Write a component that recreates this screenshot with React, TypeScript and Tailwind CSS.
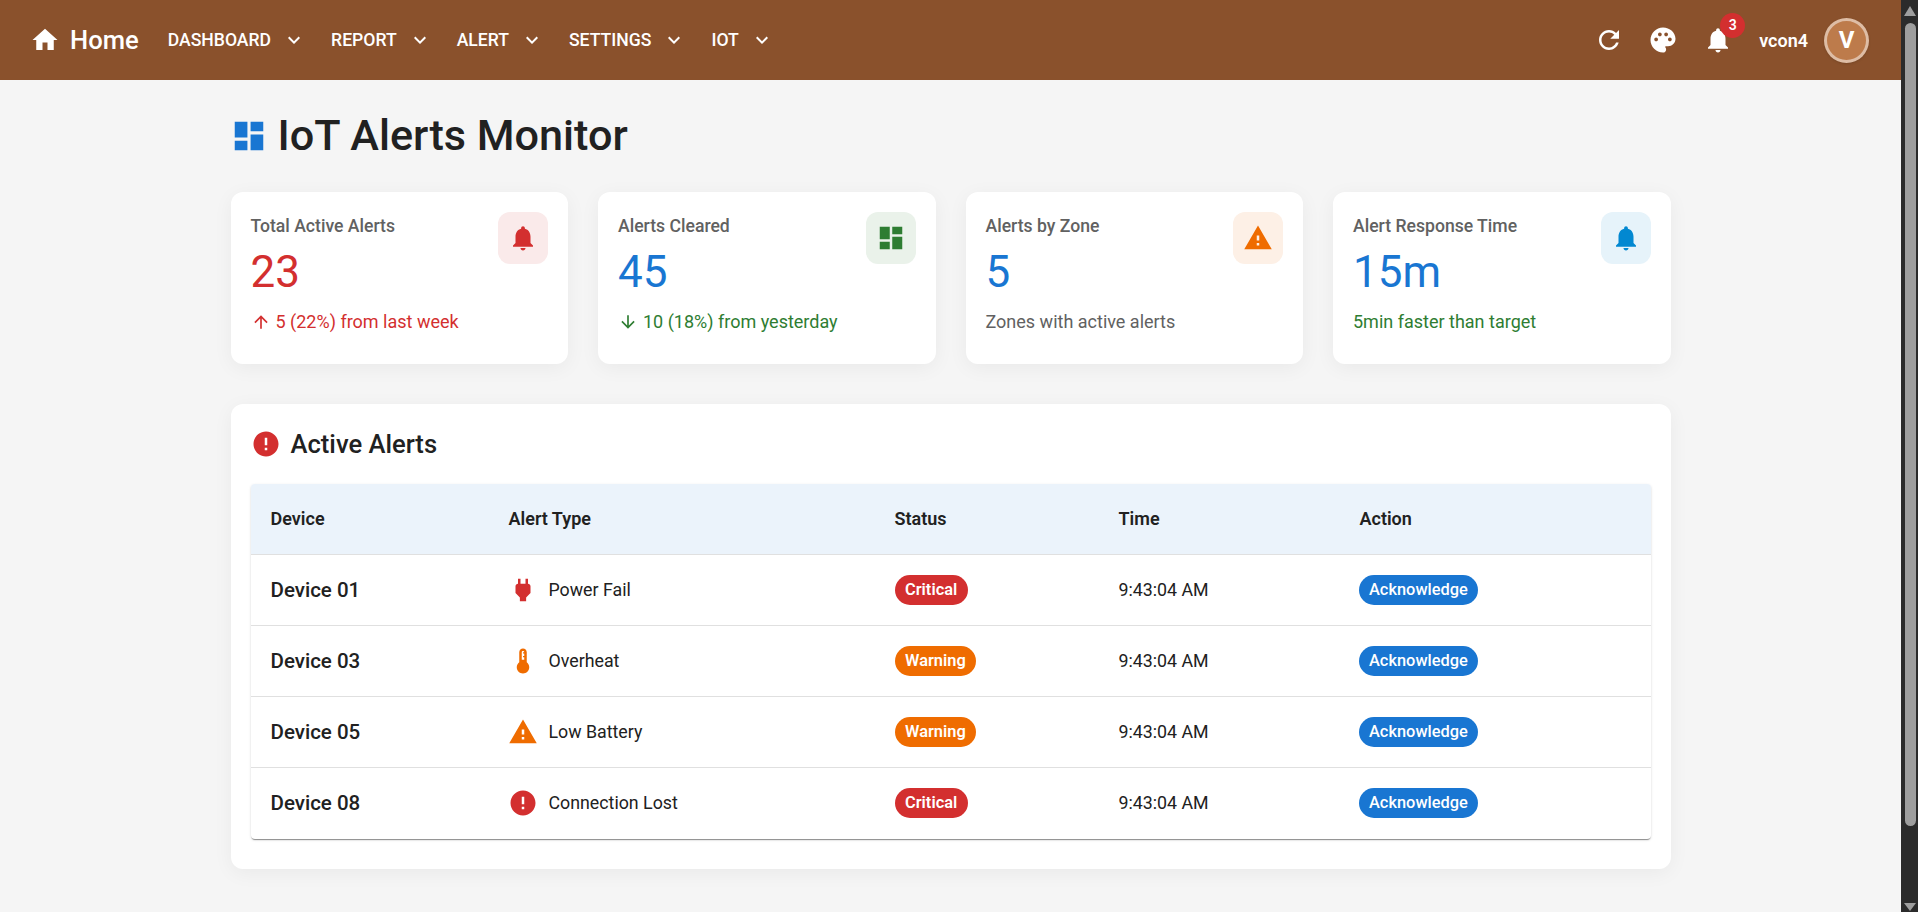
import type { ReactNode } from 'react';

const P = {
  home: 'M10 20v-6h4v6h5v-8h3L12 3 2 12h3v8z',
  chevron: 'M7.41 8.59 12 13.17l4.59-4.58L18 10l-6 6-6-6z',
  refresh: 'M17.65 6.35C16.2 4.9 14.21 4 12 4c-4.42 0-7.99 3.58-7.99 8s3.57 8 7.99 8c3.73 0 6.84-2.55 7.73-6h-2.08c-.82 2.33-3.04 4-5.65 4-3.31 0-6-2.69-6-6s2.69-6 6-6c1.66 0 3.14.69 4.22 1.78L13 11h7V4l-2.35 2.35z',
  palette: 'M12 2C6.49 2 2 6.49 2 12s4.49 10 10 10c1.38 0 2.5-1.12 2.5-2.5 0-.61-.23-1.2-.64-1.67-.08-.1-.13-.21-.13-.33 0-.28.22-.5.5-.5H16c3.31 0 6-2.69 6-6 0-4.96-4.49-9-10-9zm5.5 11c-.83 0-1.5-.67-1.5-1.5s.67-1.5 1.5-1.5 1.5.67 1.5 1.5-.67 1.5-1.5 1.5zm-3-4c-.83 0-1.5-.67-1.5-1.5S13.67 6 14.5 6s1.5.67 1.5 1.5S15.33 9 14.5 9zM5 11.5c0-.83.67-1.5 1.5-1.5s1.5.67 1.5 1.5S7.33 13 6.5 13 5 12.33 5 11.5zm6-4c0 .83-.67 1.5-1.5 1.5S8 8.33 8 7.5 8.67 6 9.5 6s1.5.67 1.5 1.5z',
  bell: 'M12 22c1.1 0 2-.9 2-2h-4c0 1.1.89 2 2 2zm6-6v-5c0-3.07-1.64-5.64-4.5-6.32V4c0-.83-.67-1.5-1.5-1.5s-1.5.67-1.5 1.5v.68C7.63 5.36 6 7.92 6 11v5l-2 2v1h16v-1l-2-2z',
  dashboard: 'M3 13h8V3H3v10zm0 8h8v-6H3v6zm10 0h8V11h-8v10zm0-18v6h8V3h-8z',
  warning: 'M1 21h22L12 2 1 21zm12-3h-2v-2h2v2zm0-4h-2v-4h2v4z',
  error: 'M12 2C6.48 2 2 6.48 2 12s4.48 10 10 10 10-4.48 10-10S17.52 2 12 2zm1 15h-2v-2h2v2zm0-4h-2V7h2v6z',
  up: 'M4 12l1.41 1.41L11 7.83V20h2V7.83l5.58 5.59L20 12l-8-8-8 8z',
  down: 'M20 12l-1.41-1.41L13 16.17V4h-2v12.17l-5.58-5.59L4 12l8 8 8-8z',
  power: 'M16.01 7 16 3h-2v4h-4V3H8v4h-.01C7 6.99 6 7.99 6 8.99v5.49L9.5 18v3h5v-3l3.5-3.51v-5.5c0-1-1-2-1.99-1.99z',
  thermostat: 'M15 13V5c0-1.66-1.34-3-3-3S9 3.34 9 5v8c-1.21.91-2 2.37-2 4 0 2.76 2.24 5 5 5s5-2.24 5-5c0-1.63-.79-3.09-2-4zm-4-8c0-.55.45-1 1-1s1 .45 1 1h-1v1h1v2h-1v1h1v2h-2V5z',
};

function Icon({ d, className }: { d: string; className: string }) {
  return (
    <svg viewBox="0 0 24 24" fill="currentColor" className={`shrink-0 ${className}`}>
      <path d={d} />
    </svg>
  );
}

const navItems = ['DASHBOARD', 'REPORT', 'ALERT', 'SETTINGS', 'IOT'];

function Header() {
  return (
    <header className="h-20 shrink-0 bg-[#8a512c] text-white flex items-center pl-[30px] pr-[32px]">
      <div className="flex items-center gap-[10px] mr-[29px]">
        <Icon d={P.home} className="w-[30px] h-[30px]" />
        <span className="text-[25.6px] font-medium leading-none pt-[1px]">Home</span>
      </div>
      <nav className="flex items-center gap-[25px]">
        {navItems.map((n) => (
          <div key={n} className="flex items-center gap-[11px]">
            <span className="text-[17.6px] font-medium">{n}</span>
            <Icon d={P.chevron} className="w-6 h-6" />
          </div>
        ))}
      </nav>
      <div className="ml-auto flex items-center">
        <Icon d={P.refresh} className="w-[30px] h-[30px] mr-[24px]" />
        <Icon d={P.palette} className="w-[30px] h-[30px] mr-[25px]" />
        <div className="relative mr-[26px]">
          <Icon d={P.bell} className="w-[30px] h-[30px]" />
          <span className="absolute -top-[12px] left-[17px] w-[25px] h-[25px] rounded-full bg-[#d32f2f] flex items-center justify-center text-[14px] font-semibold">3</span>
        </div>
        <span className="text-[18px] font-semibold mr-[16px]">vcon4</span>
        <div className="w-[45px] h-[45px] rounded-full bg-[#bd7b4b] border-[3px] border-white/50 shadow flex items-center justify-center text-[24px] font-bold">V</div>
      </div>
    </header>
  );
}

function StatCard(props: {
  label: string; value: string; valueColor: string; iconBox: string; icon: ReactNode; sub: ReactNode;
}) {
  return (
    <div className="bg-white rounded-xl p-5 h-[172px] shadow-[0_4px_20px_rgba(0,0,0,0.05)] flex justify-between items-start">
      <div>
        <div className="text-[17.6px] font-medium text-[#616161] leading-[28px]">{props.label}</div>
        <div className={`mt-[6px] text-[44px] leading-[52px] ${props.valueColor}`}>{props.value}</div>
        <div className="mt-[12px] text-[18px] leading-[24px] flex items-center gap-[5px]">{props.sub}</div>
      </div>
      <div className={`w-[50px] h-[52px] rounded-xl flex items-center justify-center ${props.iconBox}`}>{props.icon}</div>
    </div>
  );
}

const rows = [
  { device: 'Device 01', icon: P.power, color: 'text-[#d32f2f]', type: 'Power Fail', status: 'Critical', badge: 'bg-[#d32f2f]' },
  { device: 'Device 03', icon: P.thermostat, color: 'text-[#ef6c00]', type: 'Overheat', status: 'Warning', badge: 'bg-[#ef6c00]' },
  { device: 'Device 05', icon: P.warning, color: 'text-[#ef6c00]', type: 'Low Battery', status: 'Warning', badge: 'bg-[#ef6c00]' },
  { device: 'Device 08', icon: P.error, color: 'text-[#d32f2f]', type: 'Connection Lost', status: 'Critical', badge: 'bg-[#d32f2f]' },
];

function AlertsTable() {
  return (
    <div className="rounded shadow-[0_2px_1px_-1px_rgba(0,0,0,0.3),0_1px_1px_0_rgba(0,0,0,0.14),0_1px_3px_0_rgba(0,0,0,0.12)] overflow-hidden">
      <table className="w-full table-fixed border-collapse text-left text-[#212121]">
        <thead>
          <tr className="h-[70px] bg-[#ebf3fb] border-b border-[#e0e0e0] text-[18px]">
            <th className="w-[238px] pl-5 font-semibold">Device</th>
            <th className="w-[386px] pl-5 font-semibold">Alert Type</th>
            <th className="w-[224px] pl-5 font-semibold">Status</th>
            <th className="w-[241px] pl-5 font-semibold">Time</th>
            <th className="pl-5 font-semibold">Action</th>
          </tr>
        </thead>
        <tbody>
          {rows.map((r, i) => (
            <tr key={r.device} className={i < rows.length - 1 ? 'h-[71px] border-b border-[#e0e0e0]' : 'h-[72px]'}>
              <td className="pl-5 pt-[1px] text-[20.5px] font-medium">{r.device}</td>
              <td className="pl-5">
                <div className="flex items-center gap-[11px] -ml-[1px] text-[17.8px]">
                  <Icon d={r.icon} className={`w-[30px] h-[30px] ${r.color}`} />
                  <span className="pt-[1px]">{r.type}</span>
                </div>
              </td>
              <td className="pl-5">
                <span className={`inline-flex items-center h-[30px] pt-[1px] px-[10.5px] rounded-full text-white text-[16.4px] font-semibold ${r.badge}`}>{r.status}</span>
              </td>
              <td className="pl-5 pt-[1px] text-[17.8px]">9:43:04 AM</td>
              <td className="pl-5">
                <span className="inline-flex items-center h-[30px] pt-[1px] px-[10.5px] -ml-[1px] rounded-full bg-[#1976d2] text-white text-[16.4px] font-medium">Acknowledge</span>
              </td>
            </tr>
          ))}
        </tbody>
      </table>
    </div>
  );
}

function Scrollbar() {
  return (
    <aside className="w-[17px] shrink-0 bg-[#2b2b2b] flex flex-col items-center">
      <div className="h-[23px] w-full flex justify-center pt-[6px]">
        <div className="w-0 h-0 border-x-[6px] border-x-transparent border-b-[10px] border-b-[#9e9e9e]" />
      </div>
      <div className="w-[11px] h-[803px] ml-[1px] rounded-full bg-[#9e9e9e]" />
      <div className="mt-auto pb-[1px]">
        <div className="w-0 h-0 border-x-[6px] border-x-transparent border-t-[8px] border-t-[#9e9e9e]" />
      </div>
    </aside>
  );
}

export default function App() {
  return (
    <div className="h-screen flex overflow-hidden bg-[#f5f5f5] font-['Roboto',sans-serif] text-[#212121]">
      <div className="flex-1 min-w-0 flex flex-col">
        <Header />
        <main className="w-[1440px] mx-auto">
          <h1 className="flex items-center gap-[10px] h-[112px] text-[43.2px] font-medium">
            <Icon d={P.dashboard} className="w-[38px] h-[38px] -ml-[1px] text-[#1976d2]" />
            IoT Alerts Monitor
          </h1>
          <div className="grid grid-cols-4 gap-[30px]">
            <StatCard
              label="Total Active Alerts" value="23" valueColor="text-[#d32f2f]" iconBox="bg-[#faeaea]"
              icon={<Icon d={P.bell} className="w-[30px] h-[30px] text-[#d32f2f]" />}
              sub={<><Icon d={P.up} className="w-5 h-5 text-[#d32f2f]" /><span className="text-[#d32f2f]">5 (22%) from last week</span></>}
            />
            <StatCard
              label="Alerts Cleared" value="45" valueColor="text-[#1976d2]" iconBox="bg-[#eaf2ea]"
              icon={<Icon d={P.dashboard} className="w-[30px] h-[30px] text-[#2e7d32]" />}
              sub={<><Icon d={P.down} className="w-5 h-5 text-[#2e7d32]" /><span className="text-[#2e7d32]">10 (18%) from yesterday</span></>}
            />
            <StatCard
              label="Alerts by Zone" value="5" valueColor="text-[#1976d2]" iconBox="bg-[#fdf0e6]"
              icon={<Icon d={P.warning} className="w-[30px] h-[30px] text-[#ef6c00]" />}
              sub={<span className="text-[#616161]">Zones with active alerts</span>}
            />
            <StatCard
              label="Alert Response Time" value="15m" valueColor="text-[#1976d2]" iconBox="bg-[#e6f3fa]"
              icon={<Icon d={P.bell} className="w-[30px] h-[30px] text-[#0288d1]" />}
              sub={<span className="text-[#2e7d32]">5min faster than target</span>}
            />
          </div>
          <section className="mt-10 bg-white rounded-xl shadow-[0_4px_20px_rgba(0,0,0,0.05)] px-5 pt-5 pb-[30px]">
            <div className="flex items-center gap-[10px] h-[40px] mb-5">
              <Icon d={P.error} className="w-[30px] h-[30px] text-[#d32f2f]" />
              <h2 className="text-[25.6px] font-medium">Active Alerts</h2>
            </div>
            <AlertsTable />
          </section>
        </main>
      </div>
      <Scrollbar />
    </div>
  );
}
